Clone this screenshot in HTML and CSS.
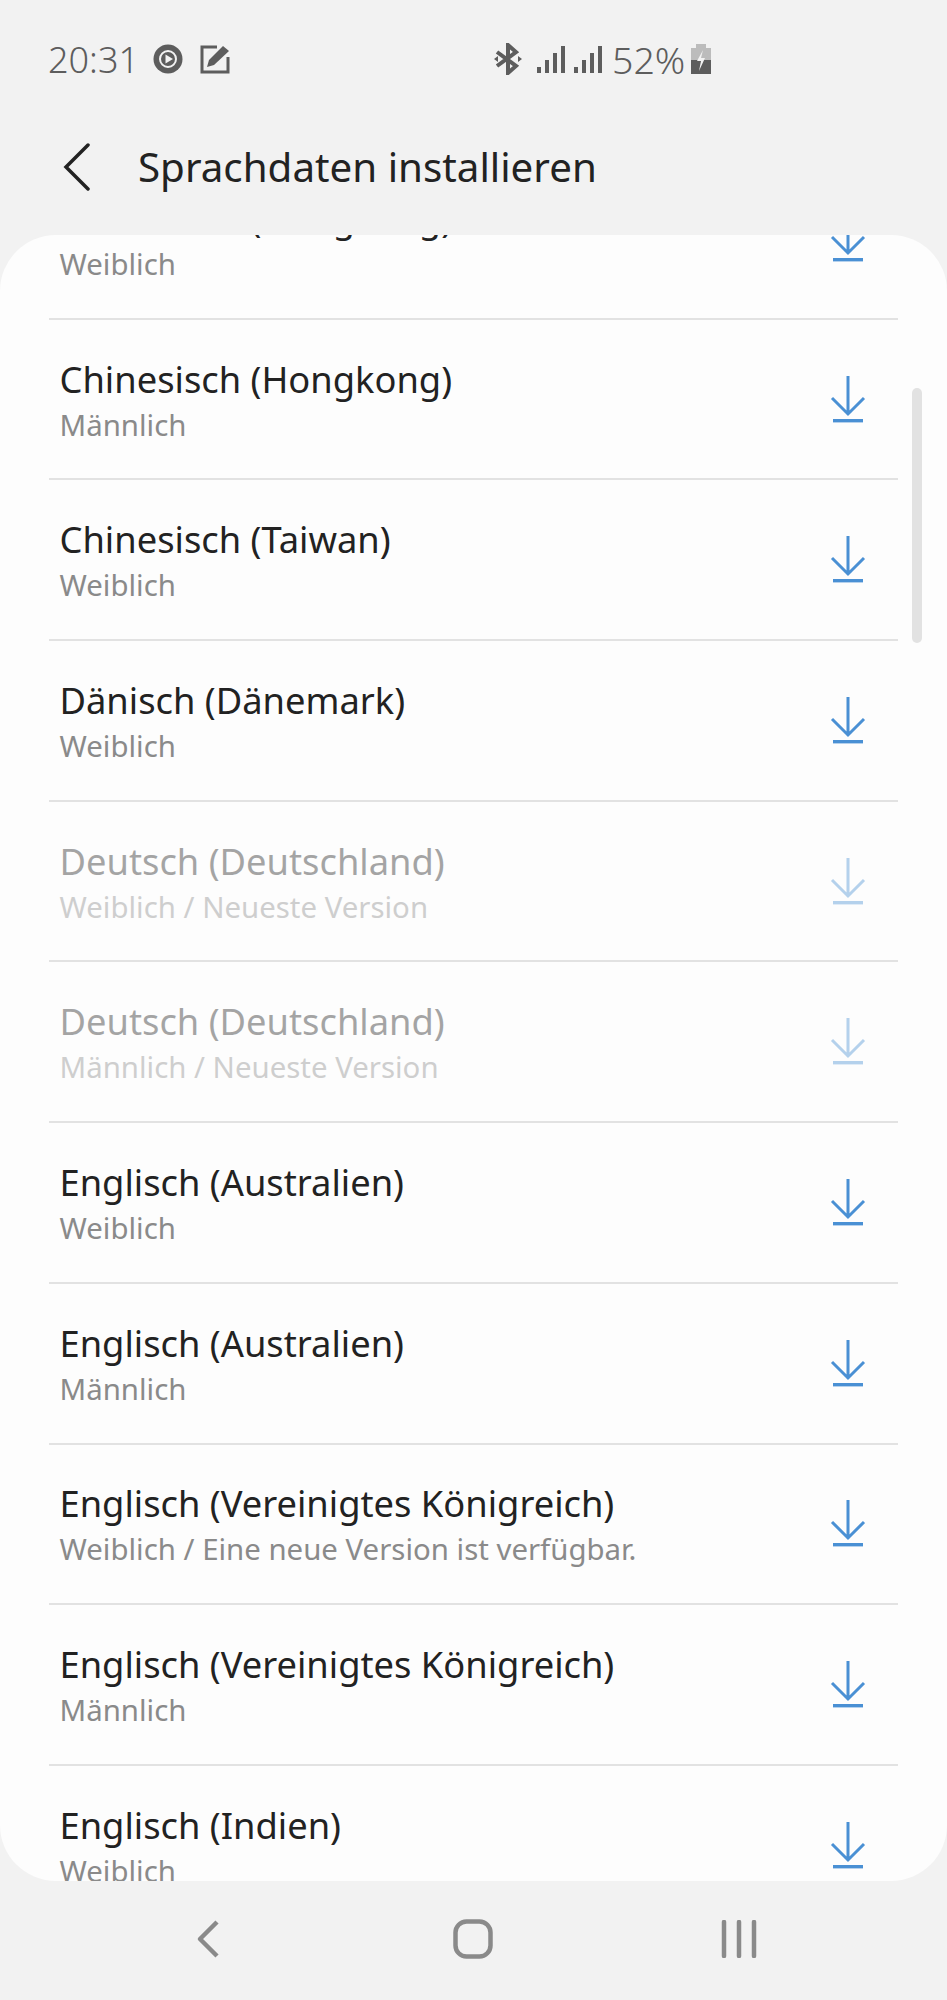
FILE: index.html
```html
<!DOCTYPE html>
<html lang="de">
<head>
  <meta charset="UTF-8">
  <title>Sprachdaten installieren</title>
  <link rel="stylesheet" href="styles.css">
</head>
<body>
  <svg class="defs" width="0" height="0">
    <symbol id="dl" viewBox="0 0 36 50">
      <path d="M18 0V38M2 22L18 38L34 22" fill="none" stroke="#4a90d4" stroke-width="3"/>
      <rect x="3" y="43" width="30" height="3.400" fill="#4a90d4"/>
    </symbol>
  </svg>
  <div class="page">
    <div class="statusbar">
      <div class="status-left">
        <span class="clock">20:31</span>
        <svg class="ic-play" width="30" height="30" viewBox="0 0 30 30">
          <circle cx="15" cy="15" r="14.5" fill="#5d5d5d"/>
          <circle cx="15" cy="15" r="8" fill="none" stroke="#f2f2f2" stroke-width="2"/>
          <path d="M12.5 10.5L20 15L12.5 19.500Z" fill="#f2f2f2"/>
        </svg>
        <svg class="ic-edit" width="30" height="30" viewBox="0 0 30 30">
          <path d="M17 3H2V28H28V13" fill="none" stroke="#5d5d5d" stroke-width="3"/>
          <path d="M23 2L29 7L14 21L7 23L9 16Z" fill="#5d5d5d"/>
        </svg>
      </div>
      <div class="status-right">
        <svg width="28" height="32" viewBox="0 0 28 32">
          <path d="M3 9L22 23L14 30V2L22 9L3 23" fill="none" stroke="#5d5d5d" stroke-width="4"/>
          <path d="M0 16L4 13V19ZM28 16L24 13V19Z" fill="#5d5d5d"/>
        </svg>
        <svg class="ic-signal" width="28" height="28" viewBox="0 0 28 28">
          <rect x="0" y="22" width="4" height="6" fill="#5d5d5d"/>
          <rect x="8" y="15" width="4" height="13" fill="#5d5d5d"/>
          <rect x="16" y="8" width="4" height="20" fill="#5d5d5d"/>
          <rect x="24" y="1" width="4" height="27" fill="#5d5d5d"/>
        </svg>
        <svg class="ic-signal" width="28" height="28" viewBox="0 0 28 28">
          <rect x="0" y="22" width="4" height="6" fill="#5d5d5d"/>
          <rect x="8" y="15" width="4" height="13" fill="#5d5d5d"/>
          <rect x="16" y="8" width="4" height="20" fill="#5d5d5d"/>
          <rect x="24" y="1" width="4" height="27" fill="#5d5d5d"/>
        </svg>
        <span class="battery-pct">52%</span>
        <svg class="ic-batt" width="20" height="30" viewBox="0 0 20 30">
          <path d="M5 0H15V4H20V16H0V4H5Z" fill="#bcbcbc"/>
          <rect y="16" width="20" height="14" fill="#5d5d5d"/>
          <path d="M12 6L6 17H10L8 27L14 14H10Z" fill="#f2f2f2"/>
        </svg>
      </div>
    </div>

    <div class="appbar">
      <svg class="back" width="30" height="48" viewBox="0 0 30 48">
        <path d="M25 2L3 24L25 46" fill="none" stroke="#222" stroke-width="3.500" stroke-linecap="round"/>
      </svg>
      <h1>Sprachdaten installieren</h1>
    </div>

    <div class="card">
      <ul class="list">
        <li class="row"><div class="text"><div class="title">Chinesisch (Hongkong)</div><div class="sub">Weiblich</div></div><svg class="dl" width="36" height="50"><use href="#dl"/></svg></li>
        <li class="row"><div class="text"><div class="title">Chinesisch (Hongkong)</div><div class="sub">Männlich</div></div><svg class="dl" width="36" height="50"><use href="#dl"/></svg></li>
        <li class="row"><div class="text"><div class="title">Chinesisch (Taiwan)</div><div class="sub">Weiblich</div></div><svg class="dl" width="36" height="50"><use href="#dl"/></svg></li>
        <li class="row"><div class="text"><div class="title">Dänisch (Dänemark)</div><div class="sub">Weiblich</div></div><svg class="dl" width="36" height="50"><use href="#dl"/></svg></li>
        <li class="row off"><div class="text"><div class="title">Deutsch (Deutschland)</div><div class="sub">Weiblich / Neueste Version</div></div><svg class="dl" width="36" height="50"><use href="#dl"/></svg></li>
        <li class="row off"><div class="text"><div class="title">Deutsch (Deutschland)</div><div class="sub">Männlich / Neueste Version</div></div><svg class="dl" width="36" height="50"><use href="#dl"/></svg></li>
        <li class="row"><div class="text"><div class="title">Englisch (Australien)</div><div class="sub">Weiblich</div></div><svg class="dl" width="36" height="50"><use href="#dl"/></svg></li>
        <li class="row"><div class="text"><div class="title">Englisch (Australien)</div><div class="sub">Männlich</div></div><svg class="dl" width="36" height="50"><use href="#dl"/></svg></li>
        <li class="row"><div class="text"><div class="title">Englisch (Vereinigtes Königreich)</div><div class="sub">Weiblich / Eine neue Version ist verfügbar.</div></div><svg class="dl" width="36" height="50"><use href="#dl"/></svg></li>
        <li class="row"><div class="text"><div class="title">Englisch (Vereinigtes Königreich)</div><div class="sub">Männlich</div></div><svg class="dl" width="36" height="50"><use href="#dl"/></svg></li>
        <li class="row"><div class="text"><div class="title">Englisch (Indien)</div><div class="sub">Weiblich</div></div><svg class="dl" width="36" height="50"><use href="#dl"/></svg></li>
      </ul>
      <div class="scrollbar"></div>
    </div>

    <div class="navbar">
      <svg width="24" height="38" viewBox="0 0 24 38">
        <path d="M21 2L4 19L21 36" fill="none" stroke="#8a8a8a" stroke-width="4.500" stroke-linejoin="round"/>
      </svg>
      <svg width="40" height="40" viewBox="0 0 40 40">
        <rect x="2.500" y="2.500" width="35" height="35" rx="11" fill="none" stroke="#8a8a8a" stroke-width="4.500"/>
      </svg>
      <svg width="36" height="38" viewBox="0 0 36 38">
        <path d="M3 2V36M18 2V36M33 2V36" fill="none" stroke="#8a8a8a" stroke-width="4.500" stroke-linecap="round"/>
      </svg>
    </div>
  </div>
</body>
</html>
```

FILE: styles.css
```css
* { box-sizing: border-box; }
html, body { margin: 0; padding: 0; }
body { background: #f2f2f2; font-family: "Noto Sans", sans-serif; }
.defs { display: block; height: 0; }
.page { width: 947px; height: 2000px; display: flex; flex-direction: column; overflow: hidden; }

.statusbar { height: 118px; display: flex; align-items: center; padding-left: 48px; color: #5d5d5d; font-size: 36px; font-weight: 300; }
.status-left { display: flex; align-items: center; width: 446px; }
.clock { width: 105px; }
.ic-edit { margin-left: 17px; }
.status-right { display: flex; align-items: center; }
.ic-signal { margin-left: 9px; }
.status-right svg:first-child + .ic-signal { margin-left: 15px; }
.battery-pct { margin-left: 10px; font-size: 37.5px; }
.ic-batt { margin-left: 6px; }

.appbar { height: 117px; display: flex; align-items: center; padding-left: 63px; padding-bottom: 20px; }
.appbar h1 { margin: 0 0 0 45px; font-size: 40.3px; font-weight: 400; color: #222; }

.card { position: relative; height: 1646px; background: #fdfdfd; border-radius: 56px; overflow: hidden; }
.list { list-style: none; margin: -76px 49px 0; padding: 0; }
.row { height: 160.7px; display: flex; align-items: center; justify-content: space-between; padding: 0 32.5px 0 10.5px; border-bottom: 2px solid #e2e2e2; }
.title { font-size: 36.3px; line-height: 50px; color: #222; }
.sub { font-size: 29.4px; line-height: 40px; margin-top: 1px; color: #8a8a8a; }
.dl { display: block; margin-top: 3px; }
.off .text, .off .dl { opacity: 0.4; }
.scrollbar { position: absolute; left: 912px; top: 153px; width: 10px; height: 255px; background: #e2e2e2; border-radius: 5px; }

.navbar { flex: 1; display: flex; align-items: center; padding-left: 196px; padding-bottom: 4px; }
.navbar svg:nth-child(2) { margin-left: 233px; }
.navbar svg:nth-child(3) { margin-left: 228px; }
```
